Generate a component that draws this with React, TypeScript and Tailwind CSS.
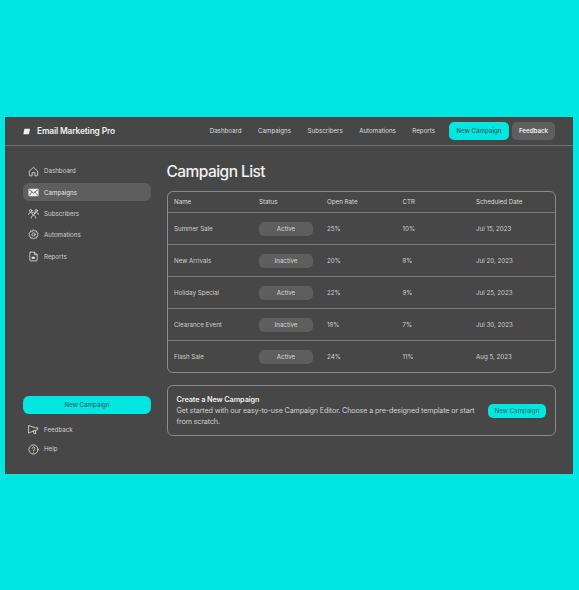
import React from "react";

const F = "font-['Inter','Liberation_Sans',sans-serif]";

const Ico = ({ children }: { children: React.ReactNode }) => (
  <svg viewBox="0 0 24 24" fill="none" stroke="#e8e8e8" strokeWidth={1.7} strokeLinecap="round" strokeLinejoin="round" className="w-[11px] h-[11px] shrink-0">
    {children}
  </svg>
);

const HomeI = () => <Ico><path d="M3 11 12 3l9 8v9a1.500 1.500 0 0 1-1.500 1.500H15v-7H9v7H4.500A1.500 1.500 0 0 1 3 20z" /></Ico>;
const MailI = () => (
  <svg viewBox="0 0 24 24" className="w-[11px] h-[11px] shrink-0">
    <rect x="1" y="4" width="22" height="16" rx="1" fill="#eeeeee" />
    <path d="M2 5.500 12 13l10-7.500M2 19l7-8M22 19l-7-8" fill="none" stroke="#555" strokeWidth="1.700" />
  </svg>
);
const UsersI = () => (
  <Ico>
    <circle cx="6" cy="6" r="2.600" /><circle cx="18" cy="6" r="2.600" /><circle cx="12" cy="12" r="2.800" />
    <path d="M1.500 14c0-3 2-4 4.500-4 1 0 1.800.2 2.500.6M22.500 14c0-3-2-4-4.500-4-1 0-1.800.2-2.500.6M7 22c0-3.500 2-5.500 5-5.500s5 2 5 5.500" />
  </Ico>
);
const GearI = () => (
  <Ico>
    <circle cx="12" cy="12" r="3.500" />
    <path d="M12 2l2.500 2.600 3.500-.6.9 3.500 3.100 1.700L20.600 12l1.400 2.800-3.100 1.700-.9 3.500-3.500-.6L12 22l-2.500-2.600-3.500.6-.9-3.500L2 14.800 3.400 12 2 9.200l3.100-1.700.9-3.500 3.500.6z" />
  </Ico>
);
const FileI = () => (
  <Ico>
    <path d="M6 2.500h8.500L20 8v12a1.500 1.500 0 0 1-1.500 1.500h-13A1.500 1.500 0 0 1 4 20V4a1.500 1.500 0 0 1 2-1.500z" />
    <path d="M14 3v5h6" />
    <rect x="8" y="12.500" width="7" height="4.500" fill="#e8e8e8" stroke="none" />
  </Ico>
);
const MegaI = () => (
  <Ico>
    <path d="M2 3.500 17 8.500h5l-3 5.500h-4L2 19.500z" />
    <path d="M12 15l1 6h4l-1-6" />
  </Ico>
);
const HelpI = () => (
  <Ico>
    <circle cx="12" cy="12" r="10" />
    <path d="M9 9.500a3 3 0 1 1 4.700 2.500c-1.100.7-1.700 1.300-1.700 2.500" />
    <path d="M12 17.800v.2" />
  </Ico>
);

const topLinks = ["Dashboard", "Campaigns", "Subscribers", "Automations", "Reports"];

const side = [
  { label: "Dashboard", icon: <HomeI /> },
  { label: "Campaigns", icon: <MailI />, active: true },
  { label: "Subscribers", icon: <UsersI /> },
  { label: "Automations", icon: <GearI /> },
  { label: "Reports", icon: <FileI /> },
];

const rows = [
  ["Summer Sale", "Active", "25%", "10%", "Jul 15, 2023"],
  ["New Arrivals", "Inactive", "20%", "8%", "Jul 20, 2023"],
  ["Holiday Special", "Active", "22%", "9%", "Jul 25, 2023"],
  ["Clearance Event", "Inactive", "18%", "7%", "Jul 30, 2023"],
  ["Flash Sale", "Active", "24%", "11%", "Aug 5, 2023"],
];

const cols = "grid grid-cols-[85px_68px_75.5px_73.5px_1fr] items-center pl-[6.500px]";

export default function App() {
  return (
    <div className={`${F} w-[579px] h-[590px] bg-[#00e6e0] pt-[117px] pl-[5px] overflow-hidden`}>
      <div className="w-[568px] h-[357px] bg-[#474747] flex flex-col text-[#dcdcdc]">
        <header className="h-[29px] shrink-0 border-b border-[#6f6f6f] flex items-center pl-[18px] pr-[18px]">
          <svg viewBox="0 0 10 10" className="w-[7px] h-[7px] shrink-0">
            <path d="M2 1h8L8.500 9H0.500z" fill="#f2f2f2" />
          </svg>
          <span className="ml-[7px] text-[8.400px] font-semibold text-[#f0f0f0] tracking-[-0.15px]">Email Marketing Pro</span>
          <nav className="ml-auto flex items-center gap-[16.500px] text-[6.200px] text-[#dedede]">
            {topLinks.map((l) => <span key={l}>{l}</span>)}
          </nav>
          <button className="ml-[14px] w-[60px] h-[18px] rounded-[5px] bg-[#00e6e0] text-[6.200px] font-medium text-[#2f5f5e]">New Campaign</button>
          <button className="ml-[3px] w-[43px] h-[18px] rounded-[5px] bg-[#5f5f5f] text-[6.200px] font-semibold text-[#eeeeee]">Feedback</button>
        </header>

        <div className="flex-1 flex min-h-0">
          <aside className="ml-[18px] mr-[15.500px] w-[128px] shrink-0 flex flex-col pt-[16px]">
            <ul className="flex flex-col gap-[3.300px]">
              {side.map((s) => (
                <li key={s.label} className={`h-[18px] rounded-[6px] flex items-center pl-[5px] gap-[5px] text-[6.200px] ${s.active ? "bg-[#5e5e5e] text-[#e4e4e4]" : "text-[#d0d0d0]"}`}>
                  {s.icon}
                  <span>{s.label}</span>
                </li>
              ))}
            </ul>
            <button className="mt-auto w-[128px] h-[18px] rounded-[6px] bg-[#00e6e0] text-[6.200px] font-medium text-[#3a6664]">New Campaign</button>
            <div className="mt-[10px] mb-[19px] flex flex-col gap-[7.500px]">
              <div className="h-[12px] flex items-center pl-[5px] gap-[5px] text-[6.200px] text-[#d0d0d0]"><MegaI /><span>Feedback</span></div>
              <div className="h-[12px] flex items-center pl-[5px] gap-[5px] text-[6.200px] text-[#d0d0d0]"><HelpI /><span>Help</span></div>
            </div>
          </aside>

          <main className="w-[389.500px] shrink-0 pt-[15.500px]">
            <h1 className="h-[20px] leading-[20px] text-[15.500px] font-medium text-[#f2f2f2] tracking-[-0.55px]">Campaign List</h1>
            <section className="mt-[9.500px] h-[182px] rounded-[6px] border border-[#8a8a8a] overflow-hidden">
              <div className={`${cols} h-[20px] text-[6.200px] text-[#dcdcdc]`}>
                <span>Name</span><span>Status</span><span>Open Rate</span><span>CTR</span><span>Scheduled Date</span>
              </div>
              {rows.map((r) => (
                <div key={r[0]} className={`${cols} h-[32px] border-t border-[#7d7d7d] text-[6.200px] text-[#cfcfcf]`}>
                  <span>{r[0]}</span>
                  <span className="w-[54px] h-[14px] rounded-[5px] bg-[#5e5e5e] flex items-center justify-center text-[#d8d8d8]">{r[1]}</span>
                  <span>{r[2]}</span><span>{r[3]}</span><span>{r[4]}</span>
                </div>
              ))}
            </section>
            <section className="mt-[12px] h-[51px] rounded-[6px] border border-[#8a8a8a] flex items-center pl-[9px] pr-[9px]">
              <div className="flex-1 pt-[1px]">
                <h2 className="text-[7.300px] leading-[10px] font-semibold text-[#eeeeee] tracking-[-0.1px]">Create a New Campaign</h2>
                <p className="mt-[1px] text-[7.200px] leading-[10.500px] text-[#cfcfcf] tracking-[-0.14px] w-[305px]">Get started with our easy-to-use Campaign Editor. Choose a pre-designed template or start from scratch.</p>
              </div>
              <button className="w-[58px] h-[14px] rounded-[5px] bg-[#00e6e0] text-[6.200px] text-[#3a6664]">New Campaign</button>
            </section>
          </main>
        </div>
      </div>
    </div>
  );
}
